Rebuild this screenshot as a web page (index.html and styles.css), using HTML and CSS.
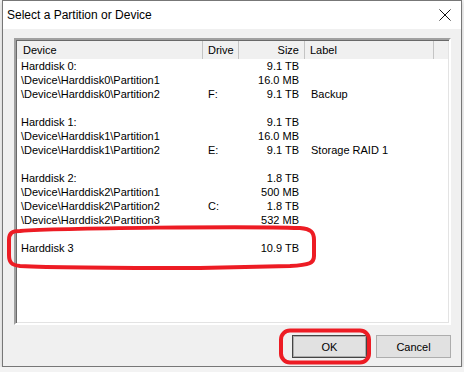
FILE: index.html
```html
<!doctype html>
<html lang="en">
<head>
  <meta charset="utf-8" />
  <title>Select a Partition or Device</title>
  <link rel="stylesheet" href="styles.css">
</head>
<body>
  <div class="win">
    <div class="titlebar">
      <span class="title">Select a Partition or Device</span>
      <svg class="close" width="12" height="12" viewBox="0 0 12 12">
        <path d="M0.5 0.5 L11.5 11.5 M11.5 0.5 L0.5 11.5" stroke="#111" stroke-width="1" fill="none" />
      </svg>
    </div>

    <div class="body">
      <div class="list">
        <div class="head">
          <div class="hc">Device</div>
          <div class="hc">Drive</div>
          <div class="hc num">Size</div>
          <div class="hc">Label</div>
          <div class="hc last"></div>
        </div>

        <div class="rows">
          <div class="row"><span>Harddisk 0:</span><span></span><span class="num">9.1 TB</span><span></span></div>
          <div class="row"><span>\Device\Harddisk0\Partition1</span><span></span><span class="num">16.0 MB</span><span></span></div>
          <div class="row"><span>\Device\Harddisk0\Partition2</span><span>F:</span><span class="num">9.1 TB</span><span>Backup</span></div>
          <div class="row"></div>
          <div class="row"><span>Harddisk 1:</span><span></span><span class="num">9.1 TB</span><span></span></div>
          <div class="row"><span>\Device\Harddisk1\Partition1</span><span></span><span class="num">16.0 MB</span><span></span></div>
          <div class="row"><span>\Device\Harddisk1\Partition2</span><span>E:</span><span class="num">9.1 TB</span><span>Storage RAID 1</span></div>
          <div class="row"></div>
          <div class="row"><span>Harddisk 2:</span><span></span><span class="num">1.8 TB</span><span></span></div>
          <div class="row"><span>\Device\Harddisk2\Partition1</span><span></span><span class="num">500 MB</span><span></span></div>
          <div class="row"><span>\Device\Harddisk2\Partition2</span><span>C:</span><span class="num">1.8 TB</span><span></span></div>
          <div class="row"><span>\Device\Harddisk2\Partition3</span><span></span><span class="num">532 MB</span><span></span></div>
          <div class="row"></div>
          <div class="row"><span>Harddisk 3</span><span></span><span class="num">10.9 TB</span><span></span></div>
        </div>
      </div>

      <div class="btns">
        <button class="btn default" type="button">OK</button>
        <button class="btn" type="button">Cancel</button>
      </div>
    </div>
  </div>

  <!-- red markup drawn over the screenshot -->
  <svg class="marks" width="464" height="372" viewBox="0 0 464 372">
    <path d="M20 231 C60 228 250 226 300 228 C311 229 314 232 314 240 L314 256 C314 263 310 265 290 266 L200 268 C120 268 40 267 20 266 C11 265 9 262 9 255 L9 240 C9 233 12 231 20 231 Z"
      fill="none" stroke="#ed1c24" stroke-width="4" />
    <rect x="281" y="330.5" width="88" height="32" rx="9" fill="none" stroke="#ed1c24" stroke-width="4" />
  </svg>
</body>
</html>
```

FILE: styles.css
```css
body { margin:0; background:#f3f3f3; font-family:"Liberation Sans", Arial, sans-serif; font-size:11px; color:#000; position:relative; }
.win { margin-left:2px; width:458px; height:365px; border:1px solid #777; background:#f0f0f0; box-shadow:0 2px 4px rgba(0,0,0,.18); display:flex; flex-direction:column; }
.titlebar { height:28px; background:#fff; display:flex; align-items:center; justify-content:space-between; padding:0 10px 0 4px; }
.title { font-size:12px; color:#000; }
.body { flex:1; padding:9px 9px 0 11px; }

.list { width:433px; height:283px; background:#fff; border:2px solid; border-color:#a0a0a0 #fff #fff #a0a0a0; box-shadow:inset 1px 1px 0 #696969, inset -1px -1px 0 #e3e3e3; overflow:hidden; }
.head { display:grid; grid-template-columns:186px 36px 66px 129px 1fr; height:18px; line-height:18px; background:#f0f0f0; margin:1px 1px 0 1px; }
.hc { border-right:1px solid #c4c4c4; padding-left:5px; white-space:nowrap; }
.hc:first-child { padding-left:6px; }
.hc.num { text-align:right; padding:0 5px 0 0; }
.hc.last { border-right:0; }

.rows { margin:0 1px; }
.row { display:grid; grid-template-columns:186px 36px 66px 129px 1fr; height:14px; line-height:14px; white-space:nowrap; }
.row span { padding-left:5px; }
.row span:first-child { padding-left:4px; }
.row span.num { text-align:right; padding:0 6px 0 0; }
.row span:nth-child(4) { padding-left:6px; }

.btns { display:flex; justify-content:flex-end; gap:9px; margin-top:10px; width:437px; }
.btn { width:75px; height:23px; font-family:inherit; font-size:11px; color:#000; background:#e1e1e1; border:1px solid #adadad; padding:0; }
.btn.default { border:1px solid #444; box-shadow:inset 0 0 0 1px #adadad; }

.marks { position:absolute; left:0; top:0; pointer-events:none; }
```
